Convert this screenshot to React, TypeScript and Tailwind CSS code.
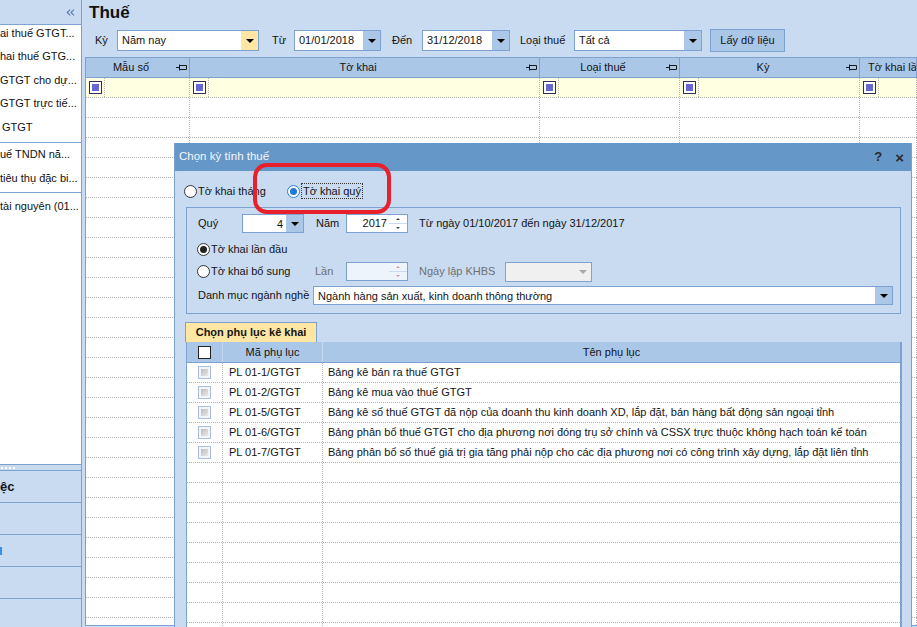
import { ChevronsLeft } from "lucide-react";

type Col = { label: string; w: string; left?: boolean };

const gridCols: Col[] = [
  { label: "Mẫu số", w: "w-[104px]" },
  { label: "Tờ khai", w: "w-[350px]" },
  { label: "Loại thuế", w: "w-[140px]" },
  { label: "Kỳ", w: "w-[180px]" },
  { label: "Tờ khai lần đầu", w: "flex-1", left: true },
];

const phuLuc = [
  ["PL 01-1/GTGT", "Bảng kê bán ra thuế GTGT"],
  ["PL 01-2/GTGT", "Bảng kê mua vào thuế GTGT"],
  ["PL 01-5/GTGT", "Bảng kê số thuế GTGT đã nộp của doanh thu kinh doanh XD, lắp đặt, bán hàng bất động sản ngoại tỉnh"],
  ["PL 01-6/GTGT", "Bảng phân bổ thuế GTGT cho địa phương nơi đóng trụ sở chính và CSSX trực thuộc không hạch toán kế toán"],
  ["PL 01-7/GTGT", "Bảng phân bổ số thuế giá trị gia tăng phải nộp cho các địa phương nơi có công trình xây dựng, lắp đặt liên tỉnh"],
];

function DownArrow({ color = "border-t-black" }: { color?: string }) {
  return <span className={`h-0 w-0 border-x-[4px] border-t-[4px] border-x-transparent ${color}`} />;
}

function Combo({ w, text, btn = "bg-[#abc7e7]", right, disabled, h = "h-[21px]" }: {
  w: string; text?: string; btn?: string; right?: boolean; disabled?: boolean; h?: string;
}) {
  return (
    <div className={`flex ${w} ${h} shrink-0 border border-[#7ea2cf] ${disabled ? "bg-[#f0f0f0]" : "bg-white"}`}>
      <span className={`flex-1 truncate leading-[18px] ${right ? "pr-[3px] text-right" : "pl-[4px]"}`}>{text}</span>
      <span className={`flex w-[17px] items-center justify-center ${disabled ? "" : btn}`}>
        <DownArrow color={disabled ? "border-t-[#a8a8a8]" : "border-t-black"} />
      </span>
    </div>
  );
}

function Spinner({ text, disabled }: { text?: string; disabled?: boolean }) {
  const arrow = disabled ? "#c8a0a8" : "#444";
  return (
    <div className={`flex h-[19px] w-[62px] shrink-0 border border-[#7ea2cf] ${disabled ? "bg-[#eef4fb]" : "bg-white"}`}>
      <span className="flex-1 pr-[2px] text-right leading-[16px]">{text}</span>
      <span className="flex w-[18px] flex-col">
        <span className="flex flex-1 items-center justify-center border-b border-[#c9dbf0]">
          <span className="h-0 w-0 border-x-[2px] border-b-[2px] border-x-transparent" style={{ borderBottomColor: arrow }} />
        </span>
        <span className="flex flex-1 items-center justify-center">
          <span className="h-0 w-0 border-x-[2px] border-t-[2px] border-x-transparent" style={{ borderTopColor: arrow }} />
        </span>
      </span>
    </div>
  );
}

function Radio({ checked, blue }: { checked?: boolean; blue?: boolean }) {
  return (
    <span className={`flex h-[13px] w-[13px] shrink-0 items-center justify-center rounded-full border bg-white ${blue ? "border-[#2d7fd6]" : "border-[#333]"}`}>
      {checked && <span className={`h-[7px] w-[7px] rounded-full ${blue ? "bg-[#1f78dc]" : "bg-[#222]"}`} />}
    </span>
  );
}

function Pin() {
  return (
    <svg width="11" height="7" viewBox="0 0 11 7" className="shrink-0">
      <path d="M0 3.5H3.5M3.5 0.5V6.5M3.5 1.5H10.5V5.5H3.5" stroke="#1a1a1a" fill="none" />
    </svg>
  );
}

function FilterBox() {
  return (
    <span className="block h-[13px] w-[13px] border border-[#2f2f5f] bg-white p-[2px]">
      <span className="block h-full w-full bg-[#6767d4]" />
    </span>
  );
}

function GrayCheck() {
  return (
    <span className="block h-[13px] w-[13px] border border-[#a9bfdb] bg-[#f4f4f4] p-[2px]">
      <span className="block h-full w-full bg-gradient-to-br from-[#bdbdbd] to-[#e8e8e8]" />
    </span>
  );
}

function Sidebar() {
  const item = "flex h-[23.5px] items-center";
  return (
    <aside className="flex h-full w-[82px] shrink-0 flex-col border-r border-[#7ea2cf]">
      <div className="flex h-[25px] items-center justify-end border-b border-[#7ea2cf] pr-[4px]">
        <ChevronsLeft size={13} color="#5a7db3" strokeWidth={2} />
      </div>
      <div className="h-[439px] overflow-hidden whitespace-nowrap bg-white text-[11px] text-[#111]">
        <div className="-mt-[4px] border-b border-[#7ea2cf] pb-[3px]">
          <div className={item}>ai thuế GTGT...</div>
          <div className={item}>hai thuế GTG...</div>
          <div className={item}>GTGT cho dự...</div>
          <div className={item}>GTGT trực tiế...</div>
          <div className={`${item} pl-[2px]`}>GTGT</div>
        </div>
        <div className="border-b border-[#7ea2cf] pb-[2px]">
          <div className={item}>uế TNDN nă...</div>
          <div className={item}>tiêu thụ đặc bi...</div>
        </div>
        <div className="pt-[2px]">
          <div className={item}>tài nguyên (01...</div>
        </div>
      </div>
      <div className="flex h-[7px] items-center gap-[2px] border-y border-[#7ea2cf] pl-[1px]">
        {[0, 1, 2, 3].map((i) => (
          <span key={i} className="h-[2px] w-[2px] bg-white" />
        ))}
      </div>
      <div className="flex h-[32px] items-center border-b border-[#7ea2cf] text-[13px] font-bold">ệc</div>
      <div className="h-[32px] border-b border-[#7ea2cf]" />
      <div className="flex h-[32px] items-center border-b border-[#7ea2cf]">
        <span className="h-[8px] w-[2px] bg-[#3a8ee6]" />
      </div>
      <div className="h-[32px] border-b border-[#7ea2cf]" />
    </aside>
  );
}

function Main() {
  return (
    <main className="flex h-full min-w-0 flex-1 flex-col pl-[3px]">
      <div className="h-[27px] pl-[4px] pt-[2px] text-[17px] font-bold leading-[22px] text-[#111]">Thuế</div>
      <div className="flex h-[30px] items-center pb-[3px]">
        <span className="w-[32px] shrink-0 pl-[10px]">Kỳ</span>
        <Combo w="w-[142px]" text="Năm nay" btn="bg-[#ffe7a3]" />
        <span className="w-[35px] shrink-0 pl-[13px]">Từ</span>
        <Combo w="w-[87px]" text="01/01/2018" />
        <span className="w-[41px] shrink-0 pl-[11px]">Đến</span>
        <Combo w="w-[88px]" text="31/12/2018" />
        <span className="w-[64px] shrink-0 pl-[10px]">Loại thuế</span>
        <Combo w="w-[128px]" text="Tất cả" />
        <button className="ml-[8px] h-[23px] w-[75px] shrink-0 border border-[#7ea2cf] bg-[#abc7e7]">Lấy dữ liệu</button>
      </div>
      <div className="mb-[1px] flex-1 overflow-hidden border-y border-l border-[#7ea2cf] bg-white">
        <div className="flex h-[20px] border-b border-[#7ea2cf] bg-[#abc7e7]">
          {gridCols.map((c) => (
            <div key={c.label} className={`${c.w} flex shrink-0 items-center overflow-hidden whitespace-nowrap border-r border-[#7ea2cf] pr-[2px]`}>
              <span className={`flex-1 ${c.left ? "pl-[8px]" : "text-center"}`}>{c.label}</span>
              {!c.left && <Pin />}
            </div>
          ))}
        </div>
        <div className="flex h-[20px] border-b border-dotted border-[#b4b4b4] bg-[#ffffe1]">
          {gridCols.map((c) => (
            <div key={c.label} className={`${c.w} flex shrink-0 border-r border-dotted border-[#b4b4b4]`}>
              <div className="flex w-[19px] items-center justify-center border-r border-dotted border-[#b4b4b4]">
                <FilterBox />
              </div>
            </div>
          ))}
        </div>
        {Array.from({ length: 27 }).map((_, r) => (
          <div key={r} className="flex h-[20px] border-b border-dotted border-[#b4b4b4]">
            {gridCols.map((c) => (
              <div key={c.label} className={`${c.w} shrink-0 border-r border-dotted border-[#b4b4b4]`} />
            ))}
          </div>
        ))}
      </div>
    </main>
  );
}

function PeriodDialog() {
  return (
    <div className="absolute left-[174px] top-[143px] h-[490px] w-[738px] overflow-hidden border-x border-[#7ea2cf] bg-[#c9dbf0]">
      <div className="flex h-[28px] items-center bg-[#6597c8] pl-[4px] pr-[7px] text-[11.5px] text-[#f4f7fb]">
        <span className="flex-1">Chọn kỳ tính thuế</span>
        <span className="mr-[13px] text-[13px] font-bold text-[#2a2a2a]">?</span>
        <span className="text-[15px] font-bold leading-none text-[#2a2a2a]">×</span>
      </div>

      <div className="mt-[12px] flex h-[16px] items-center pl-[9px]">
        <label className="flex w-[103px] items-center gap-[1px]">
          <Radio />
          <span>Tờ khai tháng</span>
        </label>
        <label className="flex items-center gap-[1px]">
          <Radio checked blue />
          <span className="border border-dotted border-[#333] px-[1px] leading-[14px]">Tờ khai quý</span>
        </label>
      </div>

      <div className="ml-[11px] mr-[10px] mt-[8px] border border-[#7ea2cf] pb-[8px] pr-[7px] pt-[6px]">
        <div className="flex h-[19px] items-center pl-[11px]">
          <span className="w-[44px] shrink-0">Quý</span>
          <Combo w="w-[62px]" h="h-[19px]" text="4" right btn="bg-[#abc7e7]" />
          <span className="w-[42px] shrink-0 pl-[12px]">Năm</span>
          <Spinner text="2017" />
          <span className="ml-[11px]">Từ ngày 01/10/2017 đến ngày 31/12/2017</span>
        </div>
        <div className="mt-[8px] flex h-[16px] items-center gap-[1px] pl-[10px]">
          <Radio checked />
          <span>Tờ khai lần đầu</span>
        </div>
        <div className="mt-[5px] flex h-[19px] items-center pl-[10px]">
          <label className="flex w-[118px] shrink-0 items-center gap-[1px]">
            <Radio />
            <span>Tờ khai bổ sung</span>
          </label>
          <span className="w-[31px] shrink-0 text-[#707070]">Lần</span>
          <Spinner disabled />
          <span className="ml-[11px] w-[86px] shrink-0 text-[#707070]">Ngày lập KHBS</span>
          <Combo w="w-[87px]" h="h-[20px]" disabled />
        </div>
        <div className="mt-[5px] flex h-[19px] items-center pl-[11px]">
          <span className="w-[115px] shrink-0">Danh mục ngành nghề</span>
          <Combo w="flex-1" h="h-[19px]" text="Ngành hàng sản xuất, kinh doanh thông thường" />
        </div>
      </div>

      <div className="ml-[10px] mt-[8px] flex h-[20px] w-[132px] items-center justify-center border-x border-t border-[#7ea2cf] bg-[#ffe7a3] font-bold">
        Chọn phụ lục kê khai
      </div>
      <div className="ml-[11px] mr-[9px] border-l border-r-2 border-[#7ea2cf] bg-white">
        <div className="flex h-[21px] border-b border-[#7ea2cf] bg-[#abc7e7]">
          <div className="flex w-[36px] shrink-0 items-center justify-center border-r border-[#c6d8ee]">
            <span className="block h-[13px] w-[13px] border border-[#222] bg-white" />
          </div>
          <div className="flex w-[100px] shrink-0 items-center justify-center border-r border-[#c6d8ee]">Mã phụ lục</div>
          <div className="flex flex-1 items-center justify-center">Tên phụ lục</div>
        </div>
        {Array.from({ length: 14 }).map((_, i) => {
          const row = phuLuc[i];
          return (
            <div key={i} className="flex h-[20px] border-b border-dotted border-[#b4b4b4]">
              <div className="flex w-[36px] shrink-0 items-center justify-center border-r border-dotted border-[#b4b4b4]">
                {row && <GrayCheck />}
              </div>
              <div className="flex w-[100px] shrink-0 items-center border-r border-dotted border-[#b4b4b4] pl-[6px]">{row?.[0]}</div>
              <div className="flex flex-1 items-center whitespace-nowrap pl-[5px]">{row?.[1]}</div>
            </div>
          );
        })}
      </div>
    </div>
  );
}

export default function App() {
  return (
    <div className="relative flex h-[627px] w-[917px] overflow-hidden bg-[#c9dbf0] font-['Liberation_Sans',Arial,sans-serif] text-[11px] text-[#141414]">
      <Sidebar />
      <Main />
      <PeriodDialog />
      <div className="pointer-events-none absolute left-[253px] top-[163px] h-[51px] w-[138px] rounded-[14px] border-4 border-[#e8202b]" />
    </div>
  );
}
